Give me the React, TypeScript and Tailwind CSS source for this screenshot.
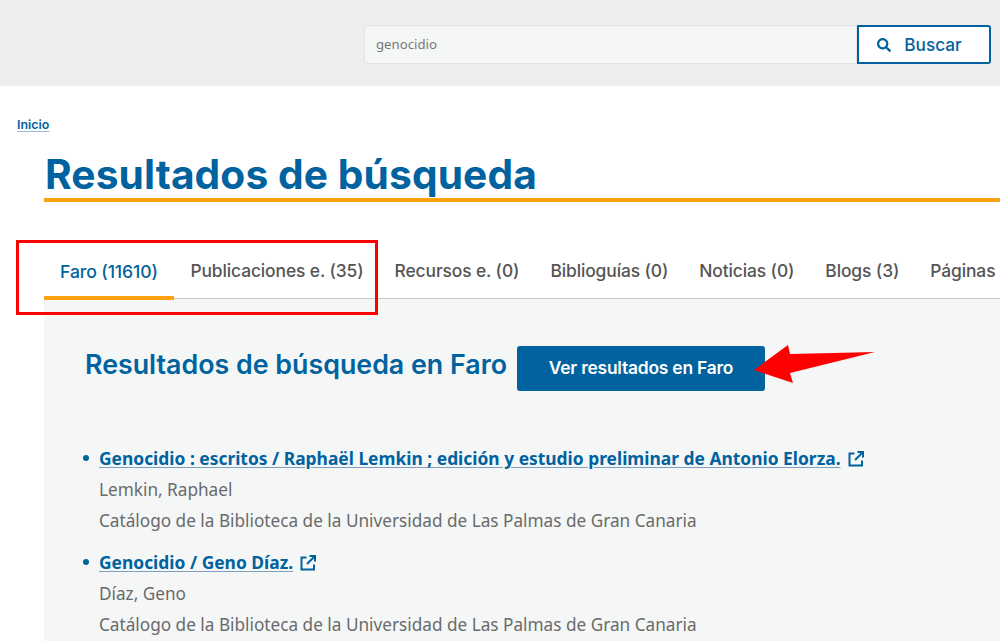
import React from "react";
import { FaSearch } from "react-icons/fa";

const tabs = [
  "Faro (11610)",
  "Publicaciones e. (35)",
  "Recursos e. (0)",
  "Biblioguías (0)",
  "Noticias (0)",
  "Blogs (3)",
  "Páginas",
];

const results = [
  {
    title: "Genocidio : escritos / Raphaël Lemkin ; edición y estudio preliminar de Antonio Elorza.",
    author: "Lemkin, Raphael",
  },
  { title: "Genocidio / Geno Díaz.", author: "Díaz, Geno" },
];

const heading = "font-['Inter','Liberation_Sans',sans-serif]";
const body = "font-['Noto_Sans','Open_Sans',sans-serif]";

function ExternalIcon() {
  return (
    <svg width="16" height="16" viewBox="0 0 16 16" fill="none" stroke="#00629e" strokeWidth="2" className="ml-[7px] shrink-0">
      <path d="M6.5 2.5H1.5V14.5H14V9.5" />
      <path d="M9.5 1H15V6.5" />
      <path d="M15 1L7 9" />
    </svg>
  );
}

export default function App() {
  return (
    <div className={`relative h-[641px] w-[1000px] overflow-hidden bg-white ${heading}`}>
      <header className="flex h-[86px] items-start justify-end bg-[#eeeeee] pt-[25px] pr-[9px]">
        <div className={`flex h-[39px] w-[493px] items-center rounded-l-[3px] border border-[#e2e4e4] bg-[#f5f7f7] pt-[1px] pl-[11px] text-[13.2px] text-[#777777] ${body}`}>
          genocidio
        </div>
        <button className="flex h-[39px] w-[134px] items-center justify-center gap-[13px] rounded-r-[3px] border-2 border-[#00629e] bg-white pr-[9px] text-[17.2px] font-medium text-[#00629e]">
          <FaSearch size={14} />
          Buscar
        </button>
      </header>

      <nav className="pt-[32px] pl-[17px] text-[12.4px] leading-[13px] font-semibold text-[#00629e]">
        <a className="underline decoration-[#9db8d2] underline-offset-2">Inicio</a>
      </nav>

      <main className="ml-11">
        <h1 className="mt-[22px] h-[49px] border-b-[4px] border-[#ffa00f] pl-px text-[40.7px] leading-[44px] font-bold tracking-[0.1px] whitespace-nowrap text-[#00629e]">
          Resultados de búsqueda
        </h1>

        <ul className="mt-[37px] flex h-[60px] border-b border-[#c8c8c8] text-[17.4px] font-medium tracking-[-0.1px] whitespace-nowrap text-[#555555]">
          {tabs.map((tab, i) => (
            <li
              key={tab}
              className={
                i === 0
                  ? "mr-[1px] flex h-[61px] items-center border-b-[4px] border-[#ffa00f] px-[16px] pt-[9px] text-[17.6px] text-[#00629e]"
                  : "flex h-[59px] items-center px-[15.5px] pt-[5px]"
              }
            >
              {tab}
            </li>
          ))}
        </ul>

        <section className="h-[400px] bg-[#f5f7f7] pt-[47px] pl-[41px]">
          <div className="flex h-[45px] items-center">
            <h2 className="w-[432px] pb-[10px] text-[26.8px] leading-[36px] font-semibold whitespace-nowrap text-[#00629e]">
              Resultados de búsqueda en Faro
            </h2>
            <a className="flex h-[45px] w-[248px] items-center justify-center rounded-[3px] bg-[#00629e] text-[17.4px] font-semibold tracking-[-0.2px] text-white">
              Ver resultados en Faro
            </a>
          </div>

          <ul className={`mt-[52px] flex flex-col gap-[11px] text-[17.2px] leading-[31px] text-[#6a6a6a] ${body}`}>
            {results.map((r) => (
              <li key={r.title} className="relative pl-[14px]">
                <span className="absolute top-[12px] -left-[2px] h-[6px] w-[6px] rounded-full bg-[#00629e]" />
                <div className="flex items-center">
                  <a className="text-[17.4px] font-bold whitespace-nowrap text-[#00629e] underline decoration-[#7f9fc0] underline-offset-2">
                    {r.title}
                  </a>
                  <ExternalIcon />
                </div>
                <div>{r.author}</div>
                <div>Catálogo de la Biblioteca de la Universidad de Las Palmas de Gran Canaria</div>
              </li>
            ))}
          </ul>
        </section>
      </main>

      {/* annotations drawn over the screenshot */}
      <div className="pointer-events-none absolute top-[240px] left-[16px] h-[75px] w-[362px] border-[3px] border-[#ff0000]" />
      <svg className="pointer-events-none absolute top-[340px] left-[750px]" width="130" height="50" viewBox="0 0 130 50">
        <path d="M4 30L38 5L40 14L125 12L40 33L43 43Z" fill="#ff0000" />
      </svg>
    </div>
  );
}
